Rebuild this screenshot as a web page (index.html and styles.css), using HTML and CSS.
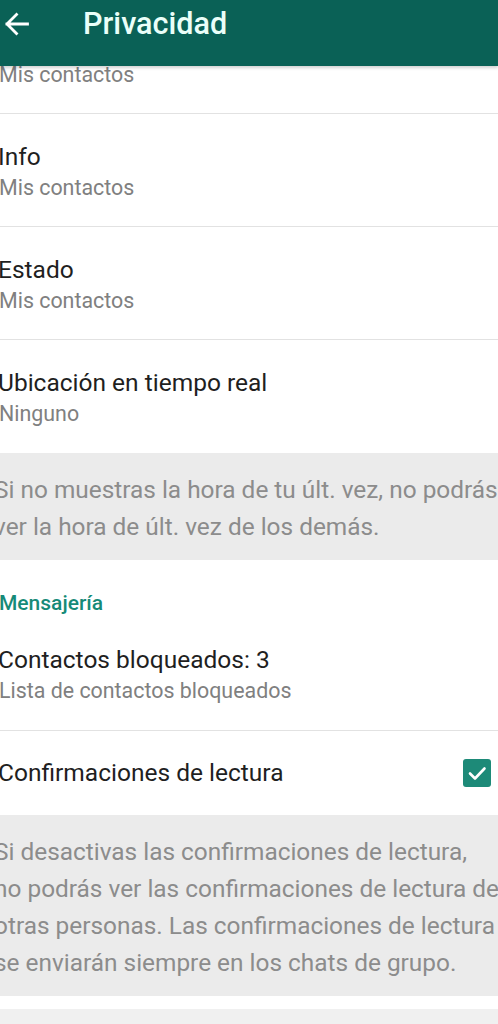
FILE: index.html
```html
<!DOCTYPE html>
<html lang="es">
<head>
<meta charset="utf-8">
<title>Privacidad</title>
<link rel="stylesheet" href="styles.css">
</head>
<body>
<header class="appbar">
  <svg class="back" width="25" height="24" viewBox="0 0 25 24" aria-hidden="true">
    <path d="M23.5 12H3M12.5 2.5L3 12L12.5 21.5" fill="none" stroke="#ffffff" stroke-width="2.8" stroke-linecap="square" stroke-linejoin="miter"/>
  </svg>
  <h1 class="title">Privacidad</h1>
</header>
<main class="list">
  <div class="row row-partial">
    <div class="sub">Mis contactos</div>
  </div>
  <div class="row">
    <div class="main-text">Info</div>
    <div class="sub">Mis contactos</div>
  </div>
  <div class="row">
    <div class="main-text">Estado</div>
    <div class="sub">Mis contactos</div>
  </div>
  <div class="row row-last">
    <div class="main-text">Ubicación en tiempo real</div>
    <div class="sub">Ninguno</div>
  </div>
  <div class="note">
    <span class="line">Si no muestras la hora de tu últ. vez, no podrás</span>
    <span class="line">ver la hora de últ. vez de los demás.</span>
  </div>
  <div class="section">Mensajería</div>
  <div class="row row-first">
    <div class="main-text">Contactos bloqueados: 3</div>
    <div class="sub">Lista de contactos bloqueados</div>
  </div>
  <div class="row row-check row-last">
    <div class="main-text">Confirmaciones de lectura</div>
    <span class="checkbox">
      <svg width="28" height="28" viewBox="0 0 28 28" aria-hidden="true">
        <path d="M7 14.5L12 19.5L21.5 9.5" fill="none" stroke="#ffffff" stroke-width="2.6" stroke-linecap="round" stroke-linejoin="round"/>
      </svg>
    </span>
  </div>
  <div class="note">
    <span class="line">Si desactivas las confirmaciones de lectura,</span>
    <span class="line">no podrás ver las confirmaciones de lectura de</span>
    <span class="line">otras personas. Las confirmaciones de lectura</span>
    <span class="line">se enviarán siempre en los chats de grupo.</span>
  </div>
  <div class="gap"></div>
  <div class="tail"></div>
</main>
</body>
</html>
```
FILE: styles.css
```css
* { box-sizing: border-box; }
html, body {
  margin: 0;
  padding: 0;
  background: #ffffff;
  font-family: Roboto, "Noto Sans", "Liberation Sans", sans-serif;
  overflow: hidden;
}
.appbar {
  position: relative;
  z-index: 2;
  height: 66px;
  background: #0a6156;
  display: flex;
  align-items: center;
  padding: 0 0 18px 4px;
  box-shadow: 0 2px 3px rgba(0,0,0,0.18);
}
.back { flex: none; display: block; }
.title {
  margin: 0 0 0 54px;
  font-size: 30.6px;
  line-height: 36px;
  font-weight: 500;
  color: #eafff9;
}
.list {
  display: flex;
  flex-direction: column;
}
.row {
  padding: 29px 0 25px 0;
  border-bottom: 1px solid #e2e2e2;
  display: flex;
  flex-direction: column;
  gap: 4px;
}
.row-partial {
  margin-top: -4px;
  padding-top: 0;
}
.row-last { border-bottom: none; padding-bottom: 26px; }
.row-first { padding-top: 30px; padding-bottom: 26px; }
.main-text {
  font-size: 24.5px;
  line-height: 28px;
  color: #1f1f1f;
  margin-left: -2px;
  white-space: nowrap;
}
.sub {
  font-size: 21.4px;
  line-height: 26px;
  color: #808080;
  margin-left: -1px;
  white-space: nowrap;
}
.row-check {
  flex-direction: row;
  align-items: center;
  justify-content: space-between;
  padding: 28px 7px 28px 0;
}
.checkbox {
  width: 28px;
  height: 28px;
  border-radius: 3px;
  background: #1d8a78;
  display: block;
  flex: none;
}
.checkbox svg { display: block; }
.note {
  background: #ebebeb;
  color: #8c8c8c;
  font-size: 24.4px;
  line-height: 37px;
  padding: 18px 0 15px 0;
  overflow: hidden;
  display: flex;
  flex-direction: column;
}
.note .line {
  display: block;
  white-space: nowrap;
  margin-left: -6px;
}
.section {
  padding-top: 30px;
  font-size: 21px;
  line-height: 26px;
  font-weight: 500;
  color: #168a78;
  margin-left: -1px;
}
.gap { height: 13px; background: #ffffff; }
.tail { height: 40px; background: #f0f0f0; }
```
